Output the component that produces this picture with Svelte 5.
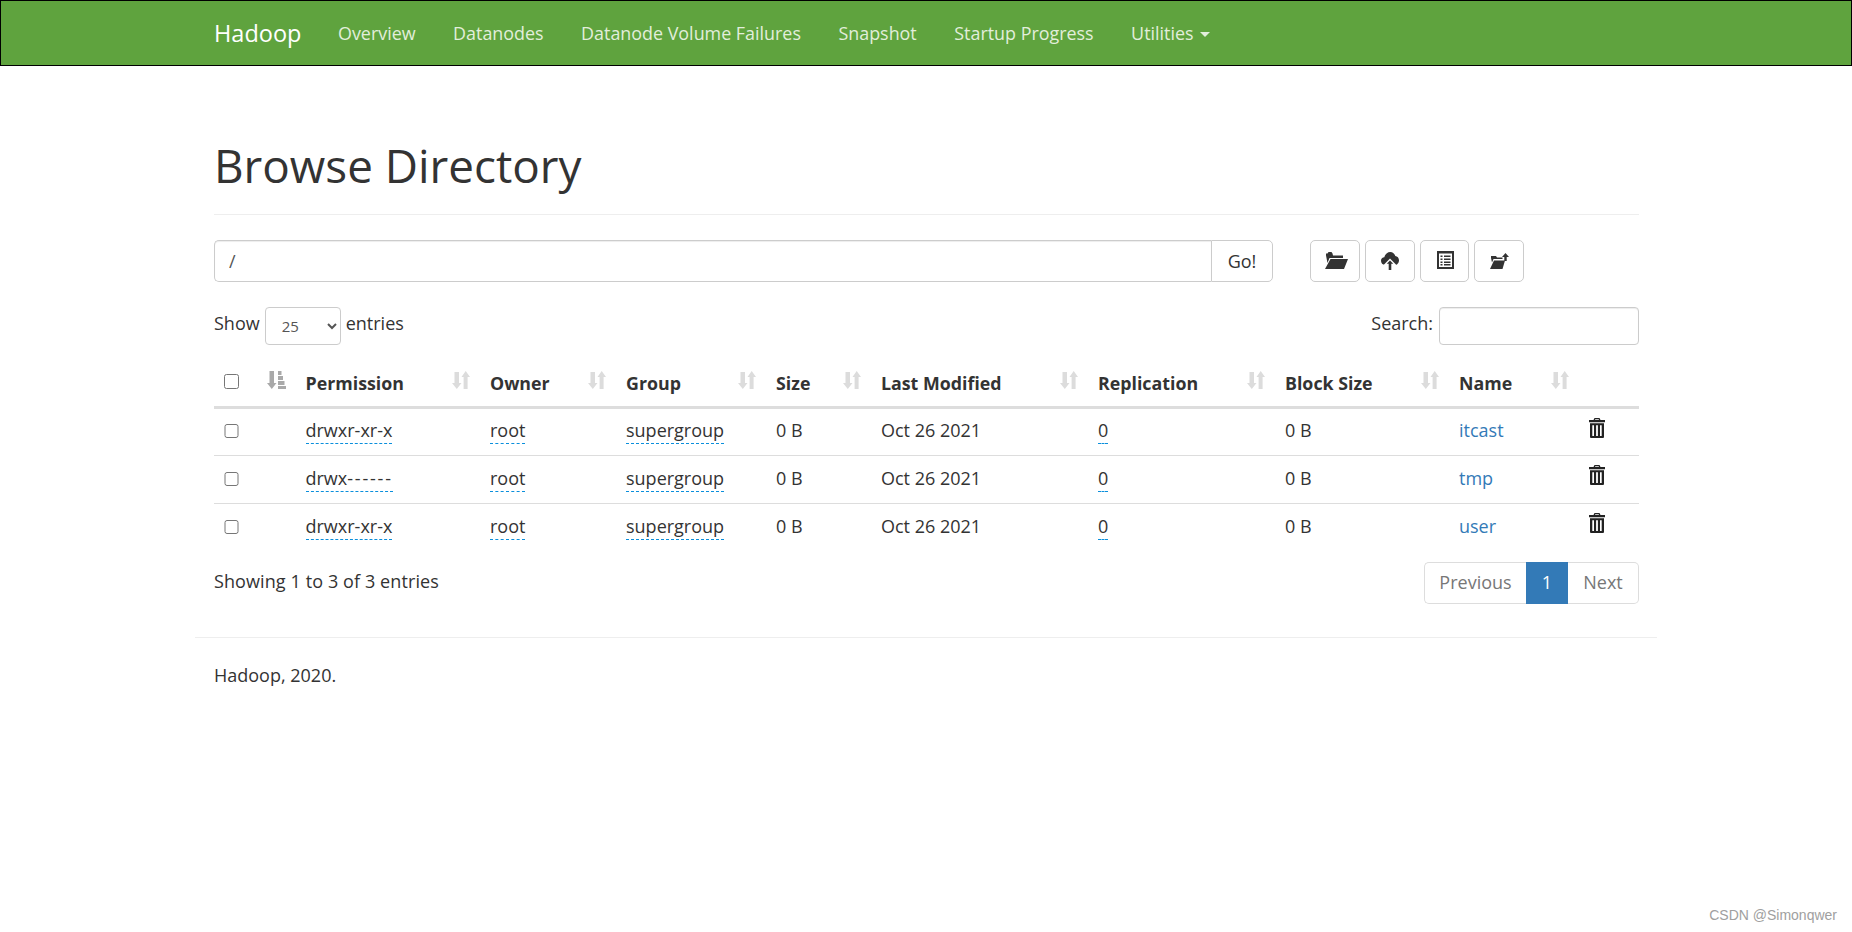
<script>
  const navItems = ['Overview', 'Datanodes', 'Datanode Volume Failures', 'Snapshot', 'Startup Progress'];
  const rows = [
    { perm: 'drwxr-xr-x', tail: '', name: 'itcast' },
    { perm: 'drwx', tail: '------', name: 'tmp' },
    { perm: 'drwxr-xr-x', tail: '', name: 'user' }
  ];
  const heads = ['Permission', 'Owner', 'Group', 'Size', 'Last Modified', 'Replication', 'Block Size', 'Name'];
</script>

{#snippet sortIcon()}
  <svg class="sort" viewBox="0 0 18 18" width="18" height="18">
    <path fill="#dcdcdc" d="M2.500 1h4.500v11h2.500l-4.700 6L0 12h2.500zM9.500 6L13.700 0 18 6h-2.400v12h-4V6z" />
  </svg>
{/snippet}

{#snippet trash()}
  <svg class="trash" viewBox="0 0 16 20" width="16" height="20">
    <path fill="#222" fill-rule="evenodd" d="M5.500 0h5l1 2h4.500v2.200H0V2h4.500zM6.300 1.200L6 2h4l-.3-.8zM1 5.200h14V19a1 1 0 0 1-1 1H2a1 1 0 0 1-1-1zM3.300 7.200V18h1.700V7.200zM7.100 7.200V18h1.800V7.200zM11 7.200V18h1.700V7.200z"/>
  </svg>
{/snippet}

<nav class="navbar">
  <div class="container navin">
    <a class="brand" href="#top">Hadoop</a>
    <ul class="navlist">
      {#each navItems as item}
        <li><a href="#top">{item}</a></li>
      {/each}
      <li><a href="#top">Utilities <span class="caret"></span></a></li>
    </ul>
  </div>
</nav>

<main class="container">
  <header class="page-header"><h1>Browse Directory</h1></header>

  <div class="toolbar">
    <div class="group">
      <input class="path" type="text" value="/" />
      <button class="go">Go!</button>
    </div>
    <div class="tools">
      <button class="tool t50 i-open" aria-label="Open">
        <svg viewBox="0 0 23 17" width="23" height="17"><path fill="#333" d="M1 3.500V1.500h1.500l1-1.500h3l1 1.500 .5 2h10V6H4.500L2.500 11zM5.500 7H23l-4 10H0z"/></svg>
      </button>
      <button class="tool t50" aria-label="Upload">
        <svg viewBox="0 0 18 18" width="18" height="18"><path fill="#333" d="M4 13C1.500 13 0 11 0 8.800c0-2 1.500-3.400 3.300-3.500C4 2.500 6.200 0 9.200 0c2.600 0 4.500 1.700 5.100 4 2.100.2 3.700 2 3.700 4.200 0 2.600-1.800 4.800-4 4.800z"/><path fill="#333" stroke="#fff" stroke-width="1.400" d="M9 7.500l5 5h-3V19H7v-6.500H4z"/></svg>
      </button>
      <button class="tool t49 i-list" aria-label="List">
        <svg viewBox="0 0 17 18" width="17" height="18"><path fill-rule="evenodd" fill="#333" d="M0 0h17v18H0zM2 2.500V16h13V2.500zM3.500 4.500h2v1.500h-2zM7 4.500h6.500v1.500H7zM3.500 7.500h2V9h-2zM7 7.500h6.500V9H7zM3.500 10.500h2V12h-2zM7 10.500h6.500V12H7zM3.500 13h2v1.500h-2zM7 13h6.500v1.500H7z"/></svg>
      </button>
      <button class="tool t50" aria-label="Move">
        <svg viewBox="0 0 19 16" width="19" height="16"><path fill="#333" d="M1 5V3h5l1 1.500h5.500V6H3.500L2 9.500zM4 7.500h11L12.500 16H0z"/><path fill="#333" d="M15.500 0L19 4h-2.300v4h-2.400V4H12z"/></svg>
      </button>
    </div>
  </div>

  <div class="controls">
    <label class="show">Show
      <select class="size"><option>25</option></select>
      entries</label>
    <label class="search">Search: <input type="text" /></label>
  </div>

  <table>
    <colgroup>
      <col class="c0" /><col class="c1" /><col class="c2" /><col class="c3" /><col class="c4" />
      <col class="c5" /><col class="c6" /><col class="c7" /><col class="c8" /><col class="c9" /><col />
    </colgroup>
    <thead>
      <tr>
        <th class="chk"><input type="checkbox" /></th>
        <th class="hsort">
          <svg class="sort" viewBox="0 0 19 18" width="19" height="18"><path fill="#a9a9a9" d="M2.500 0h4.500v12h2.500l-4.700 6L0 12h2.500zM11 0h3.500v4H11zM11 5h5V9h-5zM11 10h6.500v4H11zM11 15h8v3h-8z"/></svg>
        </th>
        {#each heads as h}
          <th class="hsort">{h}{@render sortIcon()}</th>
        {/each}
        <th></th>
      </tr>
    </thead>
    <tbody>
      {#each rows as r}
        <tr>
          <td class="chk"><input type="checkbox" /></td>
          <td></td>
          <td><span class="dash">{r.perm}<span class="tail">{r.tail}</span></span></td>
          <td><span class="dash">root</span></td>
          <td><span class="dash">supergroup</span></td>
          <td>0 B</td>
          <td>Oct 26 2021</td>
          <td><span class="dash">0</span></td>
          <td>0 B</td>
          <td><a class="link" href="#top">{r.name}</a></td>
          <td class="act">{@render trash()}</td>
        </tr>
      {/each}
    </tbody>
  </table>

  <div class="foot">
    <div class="info">Showing 1 to 3 of 3 entries</div>
    <div class="pager">
      <span class="pg prev">Previous</span>
      <span class="pg cur">1</span>
      <span class="pg next">Next</span>
    </div>
  </div>
</main>

<div class="outer-footer">
  <hr />
  <p>Hadoop, 2020.</p>
</div>

<div class="watermark">CSDN @Simonqwer</div>

<style>
  :global(body) {
    margin: 0;
    font-family: "Open Sans", "Noto Sans", sans-serif;
    font-size: 18px;
    line-height: 25px;
    color: #333;
    background: #fff;
  }
  * { box-sizing: border-box; }
  .container { width: 1462px; margin: 0 auto; padding: 0 18px 0 19px; }
  .navbar {
    height: 66px;
    background: #5fa33e;
    border: 1px solid #000;
  }
  .navin { display: flex; align-items: center; height: 64px; }
  .brand { color: #fff; font-size: 23.500px; text-decoration: none; width: 124px; }
  .navlist { display: flex; list-style: none; margin: 0; padding: 0; gap: 37.500px; font-size: 17.900px; }
  .navlist a { color: #e2eedb; text-decoration: none; white-space: nowrap; }
  .caret {
    display: inline-block;
    border-top: 5px solid #e2eedb;
    border-left: 5px solid transparent;
    border-right: 5px solid transparent;
    vertical-align: middle;
    margin-left: 2px;
  }
  .page-header { padding-top: 74px; height: 149px; border-bottom: 1px solid #eee; }
  h1 { margin: 0; font-size: 45.800px; font-weight: 400; line-height: 50px; }
  .toolbar { display: flex; margin-top: 25px; height: 42px; }
  .group { display: flex; width: 1059px; }
  .path {
    flex: 1;
    height: 42px;
    border: 1px solid #ccc;
    border-radius: 5px 0 0 5px;
    border-right: 0;
    padding: 0 14px;
    font: inherit;
    color: #555;
    box-shadow: inset 0 1px 1px rgba(0,0,0,.075);
    outline: none;
  }
  .go {
    width: 62px;
    height: 42px;
    background: #fff;
    border: 1px solid #ccc;
    border-radius: 0 5px 5px 0;
    font: inherit;
    color: #333;
    padding: 0;
  }
  .tools { display: flex; gap: 5px; margin-left: 37px; }
  .tool {
    height: 42px;
    background: #fff;
    border: 1px solid #ccc;
    border-radius: 5px;
    display: flex;
    align-items: center;
    justify-content: center;
    padding: 0;
  }
  .t50 { width: 50px; }
  .t49 { width: 49px; }
  .i-open svg { margin: -1px 0 0 2px; }
  .i-list svg { margin: -3px 0 0 2px; }
  .controls { display: flex; justify-content: space-between; margin-top: 25px; height: 38px; }
  .show, .search { display: flex; gap: 5px; height: 38px; line-height: 32px; }
  .size {
    width: 76px;
    height: 38px;
    background: #fff;
    border: 1px solid #ccc;
    border-radius: 4px;
    padding: 0 12px;
    font-family: "Open Sans", sans-serif;
    font-size: 15px;
    color: #555;
  }
  .search input {
    width: 200px;
    height: 38px;
    border: 1px solid #ccc;
    border-radius: 4px;
    box-shadow: inset 0 1px 1px rgba(0,0,0,.075);
    margin-left: 1px;
  }
  table {
    table-layout: fixed;
    width: 1425px;
    border-collapse: collapse;
    margin-top: 16px;
  }
  .c0 { width: 42px; } .c1 { width: 39.500px; } .c2 { width: 184.500px; } .c3 { width: 136px; }
  .c4 { width: 150px; } .c5 { width: 105px; } .c6 { width: 217px; } .c7 { width: 187px; }
  .c8 { width: 174px; } .c9 { width: 130px; }
  th, td { padding: 10px 10px 11px; text-align: left; vertical-align: top; height: 48px; }
  th { font-weight: 700; border-bottom: 3px solid #ddd; height: 46px; padding-top: 10px; padding-bottom: 5px; white-space: nowrap; font-size: 17.800px; }
  .hsort { position: relative; }
  .sort { position: absolute; right: 10px; top: 10px; }
  td { border-top: 1px solid #ddd; }
  tbody tr:first-child td { border-top: 0; padding-top: 9px; }
  .chk input { margin: 6px 0 0; width: 14.500px; height: 14.500px; display: block; }
  th.chk input { margin-top: 3px; }
  .dash { border-bottom: 1px dashed #0a8fdc; padding-bottom: 1px; }
  .tail { letter-spacing: 1.800px; }
  .link { color: #337ab7; text-decoration: none; }
  td.act { padding-top: 9px; padding-left: 10px; }
  .trash { display: block; }
  .foot { display: flex; justify-content: space-between; margin-top: 11px; }
  .info { padding-top: 7px; letter-spacing: .1px; }
  .pager { display: flex; height: 42px; }
  .pg {
    display: flex;
    align-items: center;
    justify-content: center;
    border: 1px solid #ddd;
    color: #777;
    padding-bottom: 2px;
  }
  .prev { width: 102px; border-radius: 5px 0 0 5px; border-right: 0; }
  .cur { width: 42px; background: #337ab7; border-color: #337ab7; color: #fff; }
  .next { width: 71px; border-radius: 0 5px 5px 0; border-left: 0; }
  .outer-footer { width: 1462px; margin: 33px auto 0; }
  hr { border: 0; border-top: 1px solid #eee; margin: 0; }
  .outer-footer p { margin: 25px 0 0 19px; }
  .watermark {
    position: absolute;
    right: 15px;
    top: 906px;
    font-family: "Liberation Sans", sans-serif;
    font-size: 14px;
    line-height: 18px;
    color: #a0a0a0;
  }
</style>
